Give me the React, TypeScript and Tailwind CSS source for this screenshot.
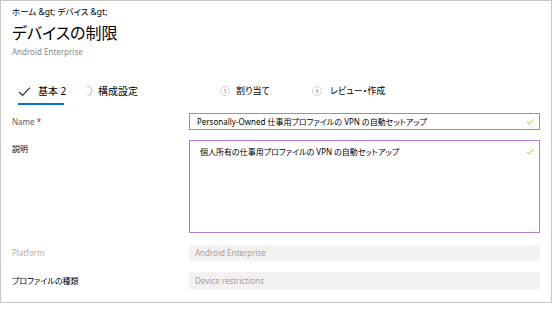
import React from 'react';

const font = "font-['Noto_Sans','Noto_Sans_CJK_JP',sans-serif] [font-feature-settings:'palt']";

function Check({ className }: { className?: string }) {
    return (
        <svg viewBox="0 0 12 10" className={className} fill="none">
            <path d="M1 5.5 L4.2 8.5 L11 1.5" stroke="currentColor" strokeWidth="1.1" />
        </svg>
    );
}

function StepNumber({ n }: { n: number }) {
    return (
        <div className="w-[10px] h-[10px] rounded-full border border-[#d2d0ce] flex items-center justify-center text-[5px] leading-none text-[#8a8886]">
            {n}
        </div>
    );
}

export default function App() {
    return (
        <div className={`w-[554px] h-[309px] bg-white text-[#201f1e] ${font}`}>
            <div className="w-[552px] h-[303px] border border-[#c8c6c4] px-[11px] pt-[4px]">
                {/* header */}
                <div className="text-[8.5px] leading-[14px] text-black">ホーム &amp;gt; デバイス &amp;gt;</div>
                <div className="mt-[2px] text-[16px] leading-[24px] text-black">デバイスの制限</div>
                <div className="mt-[1px] text-[8px] leading-[12px] text-[#8a8886]">Android Enterprise</div>

                {/* wizard tabs */}
                <div className="mt-[25px] flex items-start text-[10px] leading-[16px] text-black whitespace-nowrap">
                    <div className="ml-[6px] w-[46px] flex flex-col">
                        <div className="h-[16px] flex items-center">
                            <Check className="w-[13px] h-[11px] text-[#323130] shrink-0" />
                            <span className="ml-[7px]">基本 2</span>
                        </div>
                        <div className="mt-[4px] h-[2px] bg-[#0078d4]" />
                    </div>
                    <div className="ml-[17px] w-[139px] h-[16px] flex items-center">
                        <svg viewBox="0 0 12 12" className="w-[12px] h-[12px]" fill="none">
                            <path d="M6 1.2 A4.8 4.8 0 0 1 6 10.8" stroke="#a9cdef" strokeWidth="1.1" />
                        </svg>
                        <span className="ml-[5px]">構成設定</span>
                    </div>
                    <div className="w-[92px] h-[16px] flex items-center">
                        <StepNumber n={3} />
                        <span className="ml-[6px] text-[9px]">割り当て</span>
                    </div>
                    <div className="h-[16px] flex items-center">
                        <StepNumber n={4} />
                        <span className="ml-[8px] text-[9px]">レビュー・作成</span>
                    </div>
                </div>

                {/* form */}
                <div className="mt-[8px] flex flex-col text-[8px]">
                    <div className="flex items-center">
                        <div className="w-[178px] text-[#605e5c]">
                            Name <span className="text-[#a4262c]">*</span>
                        </div>
                        <div className="w-[353px] h-[17px] border border-[#b57ccc] flex items-center pl-[7px] pr-[4px]">
                            <span className="flex-1 text-black">Personally-Owned 仕事用プロファイルの VPN の自動セットアップ</span>
                            <Check className="w-[9px] h-[7px] text-[#7fba00]" />
                        </div>
                    </div>

                    <div className="mt-[10px] flex items-start">
                        <div className="w-[178px] pt-[3px] text-black">説明</div>
                        <div className="w-[353px] h-[93px] border border-[#b57ccc] flex items-start pl-[10px] pr-[4px] pt-[5px]">
                            <span className="flex-1 text-black">個人所有の仕事用プロファイルの VPN の自動セットアップ</span>
                            <Check className="mt-[2px] w-[9px] h-[7px] text-[#7fba00]" />
                        </div>
                    </div>

                    <div className="mt-[12px] flex items-center">
                        <div className="w-[178px] text-[#b3b0ad]">Platform</div>
                        <div className="w-[353px] h-[16px] bg-[#f3f2f1] rounded-[1px] flex items-center pl-[6px] text-[#a19f9d]">
                            Android Enterprise
                        </div>
                    </div>

                    <div className="mt-[11px] flex items-center">
                        <div className="w-[178px] text-black">プロファイルの種類</div>
                        <div className="w-[353px] h-[17px] bg-[#f3f2f1] rounded-[1px] flex items-center pl-[6px] text-[#a19f9d]">
                            Device restrictions
                        </div>
                    </div>
                </div>
            </div>
        </div>
    );
}
